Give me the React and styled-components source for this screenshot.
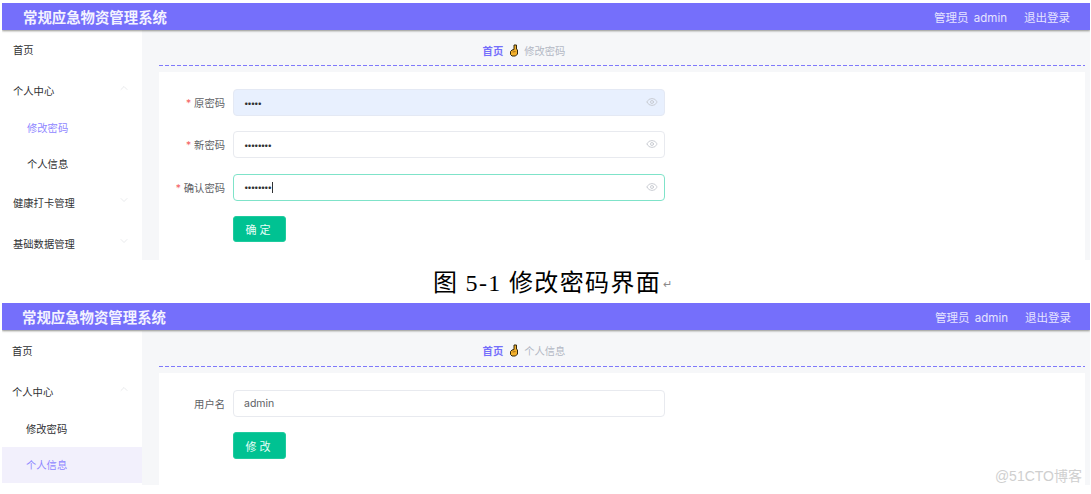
import React from "react";
import styled, { createGlobalStyle } from "styled-components";
import { ChevronDown, ChevronUp, Eye } from "lucide-react";

const UI_FONT = `"Inter", "Noto Sans CJK SC", sans-serif`;

const GlobalStyle = createGlobalStyle`
  html, body {
    margin: 0;
    padding: 0;
    background: #fff;
  }
  body {
    font-family: ${UI_FONT};
    overflow: hidden;
  }
`;

function Hand() {
  return (
    <svg width="10" height="13" viewBox="0 0 10 13">
      <path
        d="M5 1 L7.5 1 L7.5 5 L8.5 6 L8.5 10 L6.5 12 L3 12 L1.5 10.5 L1.5 7.5 L3 6 L5 5.5 Z"
        fill="#f2b02c"
        stroke="#33280f"
        strokeWidth="1"
        strokeLinejoin="round"
      />
      <path d="M3.5 8 L6.5 7.5" stroke="#a8701a" strokeWidth="1" />
    </svg>
  );
}

function Field({ label, required, value, variant, caret, password }) {
  return (
    <Row>
      <Label>
        {required && <Star>*</Star>}
        {label}
      </Label>
      <InputBox $variant={variant}>
        <Value $password={password}>{value}</Value>
        {caret && <Caret />}
        {password && (
          <EyeSlot>
            <Eye size={12} strokeWidth={1.8} />
          </EyeSlot>
        )}
      </InputBox>
    </Row>
  );
}

function Screen({ crumb, active, tinted, children, height, second }) {
  return (
    <Panel $height={height}>
      <Header>
        <Title $second={second}>常规应急物资管理系统</Title>
        <HeaderRight $second={second}>
          <span>管理员 admin</span>
          <span>退出登录</span>
        </HeaderRight>
      </Header>
      <Body>
        <Sidebar $second={second}>
          <MenuItem>首页</MenuItem>
          <MenuItem>
            个人中心
            <ChevronUp size={12} strokeWidth={1} color="#d2d4d8" />
          </MenuItem>
          <SubGroup>
            <SubItem $active={active === "修改密码"}>修改密码</SubItem>
            <SubItem $active={active === "个人信息"} $tinted={tinted}>
              个人信息
            </SubItem>
          </SubGroup>
          {!second && (
            <>
              <MenuItem>
                健康打卡管理
                <ChevronDown size={12} strokeWidth={1} color="#d2d4d8" />
              </MenuItem>
              <MenuItem>
                基础数据管理
                <ChevronDown size={12} strokeWidth={1} color="#d2d4d8" />
              </MenuItem>
            </>
          )}
        </Sidebar>
        <Main>
          <Crumbs $second={second}>
            <CrumbHome>首页</CrumbHome>
            <Hand />
            <CrumbPage>{crumb}</CrumbPage>
          </Crumbs>
          <Card>{children}</Card>
        </Main>
      </Body>
      {second && <Watermark>@51CTO博客</Watermark>}
    </Panel>
  );
}

export default function App() {
  return (
    <Page>
      <GlobalStyle />
      <Screen crumb="修改密码" active="修改密码" height={257}>
        <Field label="原密码" required password value="•••••" variant="autofill" />
        <Field label="新密码" required password value="••••••••" />
        <Field label="确认密码" required password value="••••••••" variant="focus" caret />
        <ButtonRow>
          <SubmitButton>确定</SubmitButton>
        </ButtonRow>
      </Screen>
      <Caption>
        图 5-1 修改密码界面<ReturnMark>↵</ReturnMark>
      </Caption>
      <Screen crumb="个人信息" active="个人信息" tinted height={182} second>
        <Field label="用户名" value="admin" />
        <ButtonRow>
          <SubmitButton>修改</SubmitButton>
        </ButtonRow>
      </Screen>
    </Page>
  );
}

const Page = styled.div`
  width: 1091px;
  height: 494px;
  padding: 3px 1px 0 2px;
  box-sizing: border-box;
  overflow: hidden;
`;

const Panel = styled.section`
  position: relative;
  height: ${(p) => p.$height}px;
  overflow: hidden;
  display: flex;
  flex-direction: column;
  background: #f6f7f9;
`;

const Header = styled.header`
  position: relative;
  z-index: 1;
  flex: none;
  height: 27px;
  display: flex;
  align-items: center;
  justify-content: space-between;
  background: #756ffb;
  color: #fff;
  box-shadow: 0 1px 2px rgba(60, 60, 50, 0.55);
`;

const Title = styled.h1`
  margin: 0 0 0 ${(p) => (p.$second ? 20 : 21)}px;
  font-size: 14.4px;
  font-weight: 700;
  color: #f4f3ff;
`;

const HeaderRight = styled.div`
  display: flex;
  gap: 17px;
  margin-right: ${(p) => (p.$second ? 19 : 20)}px;
  font-size: 11.5px;
  word-spacing: 2px;
  color: #e6e4ff;
`;

const Body = styled.div`
  flex: 1;
  min-height: 0;
  display: flex;
`;

const Sidebar = styled.nav`
  --inset: ${(p) => (p.$second ? 10 : 11)}px;
  flex: none;
  width: 140px;
  margin-top: ${(p) => (p.$second ? 0.5 : -0.5)}px;
  background: #fff;
  font-size: 10.3px;
  color: #303133;
`;

const MenuItem = styled.div`
  height: 40px;
  margin-bottom: 1px;
  display: flex;
  align-items: center;
  justify-content: space-between;
  padding: 0 12.5px 0 var(--inset);
  box-sizing: border-box;

  svg {
    margin-top: -5px;
  }
`;

const SubGroup = styled.div`
  margin: -2px 0 1px;
`;

const SubItem = styled.div`
  height: 36px;
  display: flex;
  align-items: center;
  padding-left: calc(var(--inset) + 14px);
  color: ${(p) => (p.$active ? "#8f87ff" : "#303133")};
  background: ${(p) => (p.$tinted ? "#f2f0fc" : "transparent")};
`;

const Main = styled.main`
  flex: 1;
  min-width: 0;
  padding: 0 5px 0 17px;
  display: flex;
  flex-direction: column;
`;

const Crumbs = styled.div`
  flex: none;
  height: ${(p) => (p.$second ? 37 : 36)}px;
  box-sizing: border-box;
  display: flex;
  align-items: center;
  justify-content: center;
  gap: 5.5px;
  padding: 4px 196px 0 0;
  font-size: 10.3px;
  background: repeating-linear-gradient(90deg, #7f79fb 0 4px, transparent 4px 6px) left bottom / 100% 1px no-repeat;
`;

const CrumbHome = styled.span`
  color: #756ffb;
  font-weight: 700;
`;

const CrumbPage = styled.span`
  color: #b3b8c4;
`;

const Card = styled.div`
  flex: 1;
  margin-top: 6px;
  padding: 17px 0 0;
  background: #fff;
  display: flex;
  flex-direction: column;
  gap: 15.25px;
`;

const Row = styled.div`
  display: flex;
  align-items: center;
  gap: 8px;
`;

const Label = styled.label`
  width: 66px;
  text-align: right;
  font-size: 10.3px;
  color: #606266;
`;

const Star = styled.span`
  color: #f56c6c;
  margin-right: 3px;
`;

const borders = {
  autofill: "#e4e9f4",
  focus: "#7fe3c9",
};

const InputBox = styled.div`
  position: relative;
  width: 432px;
  height: 27px;
  box-sizing: border-box;
  display: flex;
  align-items: center;
  padding-left: 10px;
  border: 1px solid ${(p) => borders[p.$variant] || "#e8eaef"};
  border-radius: 4px;
  background: ${(p) => (p.$variant === "autofill" ? "#e8f0fe" : "#fff")};
`;

const Value = styled.span`
  font-size: ${(p) => (p.$password ? 8 : 10.5)}px;
  letter-spacing: ${(p) => (p.$password ? -1.15 : 0)}px;
  color: ${(p) => (p.$password ? "#303133" : "#606266")};
`;

const Caret = styled.i`
  width: 1px;
  height: 11px;
  margin-left: 1px;
  background: #303133;
`;

const EyeSlot = styled.span`
  position: absolute;
  right: 6px;
  top: 6px;
  display: flex;
  color: #c6c9d0;
`;

const ButtonRow = styled.div`
  padding-left: 74px;
`;

const SubmitButton = styled.button`
  width: 53px;
  height: 26.5px;
  padding: 0;
  border: 1px solid #1fcb9e;
  border-radius: 3px;
  background: #00c292;
  color: #e8fff8;
  font-family: inherit;
  font-size: 11px;
  letter-spacing: 3px;
`;

const Caption = styled.p`
  height: 43px;
  margin: 0;
  padding: 0 0 3px 13px;
  box-sizing: border-box;
  display: flex;
  align-items: center;
  justify-content: center;
  font-family: "Liberation Serif", "Noto Sans CJK SC", serif;
  font-size: 24px;
  letter-spacing: 1.35px;
  color: #000;
`;

const ReturnMark = styled.span`
  font-size: 11px;
  letter-spacing: 0;
  color: #8a8a8a;
  margin: 8px 0 0 2px;
`;

const Watermark = styled.div`
  position: absolute;
  right: 8px;
  bottom: 0;
  font-size: 14px;
  color: #cfcfcf;
  font-family: "Liberation Sans", "Noto Sans CJK SC", sans-serif;
`;
